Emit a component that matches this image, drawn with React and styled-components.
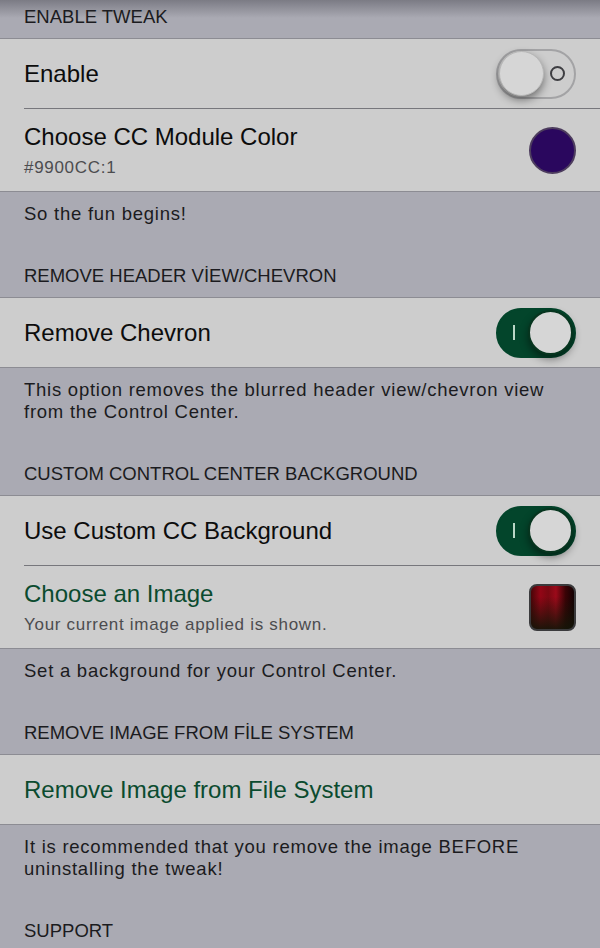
import React from "react";
import styled, { createGlobalStyle } from "styled-components";

const GlobalStyle = createGlobalStyle`
  html, body {
    margin: 0;
    padding: 0;
    background: #aaaab3;
  }
  body {
    font-family: "Liberation Sans", Arial, sans-serif;
    -webkit-font-smoothing: antialiased;
  }
`;

const Page = styled.div`
  position: relative;
  width: 600px;
  min-height: 948px;
  background: #aaaab3;
  overflow: hidden;
`;

const TopShade = styled.div`
  position: absolute;
  top: 0;
  left: 0;
  right: 0;
  height: 18px;
  background: linear-gradient(to bottom, rgba(40, 40, 50, 0.36), rgba(40, 40, 50, 0));
  pointer-events: none;
`;

const GroupHeader = styled.div`
  padding: ${(p) => (p.$first ? "6px" : "40px")} 24px 10px;
  font-size: 18.5px;
  line-height: 22px;
  color: #1b1b20;
  text-transform: uppercase;
`;

const GroupFooter = styled.div`
  padding: 11px 24px 0;
  font-size: 18.5px;
  line-height: 22px;
  letter-spacing: 0.75px;
  color: #1b1b20;
`;

const Card = styled.div`
  background: #cdcdcd;
  border-top: 1px solid #8c8c93;
  border-bottom: 1px solid #8c8c93;
`;

const Row = styled.div`
  display: flex;
  padding-left: 24px;
`;

const RowInner = styled.div`
  flex: 1;
  display: flex;
  align-items: center;
  justify-content: space-between;
  min-height: ${(p) => (p.$tall ? "82px" : "69px")};
  padding-right: 24px;
  border-bottom: ${(p) => (p.$last ? "none" : "1px solid #77777c")};
`;

const Labels = styled.div`
  display: flex;
  flex-direction: column;
  gap: 6px;
`;

const Title = styled.div`
  font-size: 24px;
  line-height: 28px;
  color: ${(p) => (p.$link ? "#0b4b2f" : "#0c0c0c")};
`;

const Subtitle = styled.div`
  font-size: 17px;
  line-height: 21px;
  letter-spacing: 0.7px;
  color: #4c4c4f;
`;

const Track = styled.div`
  box-sizing: border-box;
  width: 80px;
  height: 50px;
  border-radius: 25px;
  padding: 1px;
  display: flex;
  align-items: center;
  flex-direction: ${(p) => (p.$on ? "row" : "row-reverse")};
  background: ${(p) => (p.$on ? "#03452b" : "#cdcdcd")};
  border: 2px solid ${(p) => (p.$on ? "#03452b" : "#a3a3a5")};
`;

const Knob = styled.div`
  box-sizing: border-box;
  width: 45px;
  height: 45px;
  border-radius: 50%;
  background: #d6d6d6;
  border: ${(p) => (p.$on ? "2px solid #07351f" : "1px solid #b8b8b8")};
  box-shadow: 0 4px 8px rgba(0, 0, 0, 0.45);
`;

const Mark = styled.div`
  flex: 1;
  display: flex;
  align-items: center;
  justify-content: center;
`;

const OffRing = styled.span`
  box-sizing: border-box;
  width: 15px;
  height: 15px;
  margin-right: 3px;
  border-radius: 50%;
  border: 2px solid #3e3e42;
`;

const OnBar = styled.span`
  width: 2px;
  height: 15px;
  background: #b9d6c6;
`;

const Swatch = styled.div`
  box-sizing: border-box;
  width: 47px;
  height: 47px;
  border-radius: 50%;
  background: #2a075e;
  border: 2px solid #4d3d5e;
`;

const Thumb = styled.div`
  box-sizing: border-box;
  width: 47px;
  height: 47px;
  border-radius: 8px;
  border: 2px solid #3b3b3d;
  background:
    linear-gradient(to bottom, rgba(0, 0, 0, 0) 25%, rgba(18, 22, 8, 0.9) 100%),
    linear-gradient(
      to right,
      #4a0508 0%,
      #920616 22%,
      #7a0812 40%,
      #9b0a1a 58%,
      #3a0306 80%,
      #120102 100%
    );
`;

const Switch = ({ on }) => (
  <Track $on={on}>
    <Mark>{on ? <OnBar /> : <OffRing />}</Mark>
    <Knob $on={on} />
  </Track>
);

export default function App() {
  return (
    <Page>
      <GlobalStyle />
      <TopShade />

      <GroupHeader $first>Enable Tweak</GroupHeader>
      <Card>
        <Row>
          <RowInner>
            <Title>Enable</Title>
            <Switch on={false} />
          </RowInner>
        </Row>
        <Row>
          <RowInner $tall $last>
            <Labels>
              <Title>Choose CC Module Color</Title>
              <Subtitle>#9900CC:1</Subtitle>
            </Labels>
            <Swatch />
          </RowInner>
        </Row>
      </Card>
      <GroupFooter>So the fun begins!</GroupFooter>

      <GroupHeader>REMOVE HEADER VİEW/CHEVRON</GroupHeader>
      <Card>
        <Row>
          <RowInner $last>
            <Title>Remove Chevron</Title>
            <Switch on />
          </RowInner>
        </Row>
      </Card>
      <GroupFooter>
        This option removes the blurred header view/chevron view from the Control Center.
      </GroupFooter>

      <GroupHeader>Custom Control Center Background</GroupHeader>
      <Card>
        <Row>
          <RowInner>
            <Title>Use Custom CC Background</Title>
            <Switch on />
          </RowInner>
        </Row>
        <Row>
          <RowInner $tall $last>
            <Labels>
              <Title $link>Choose an Image</Title>
              <Subtitle>Your current image applied is shown.</Subtitle>
            </Labels>
            <Thumb />
          </RowInner>
        </Row>
      </Card>
      <GroupFooter>Set a background for your Control Center.</GroupFooter>

      <GroupHeader>REMOVE IMAGE FROM FİLE SYSTEM</GroupHeader>
      <Card>
        <Row>
          <RowInner $last>
            <Title $link>Remove Image from File System</Title>
          </RowInner>
        </Row>
      </Card>
      <GroupFooter>
        It is recommended that you remove the image BEFORE uninstalling the tweak!
      </GroupFooter>

      <GroupHeader>Support</GroupHeader>
    </Page>
  );
}
